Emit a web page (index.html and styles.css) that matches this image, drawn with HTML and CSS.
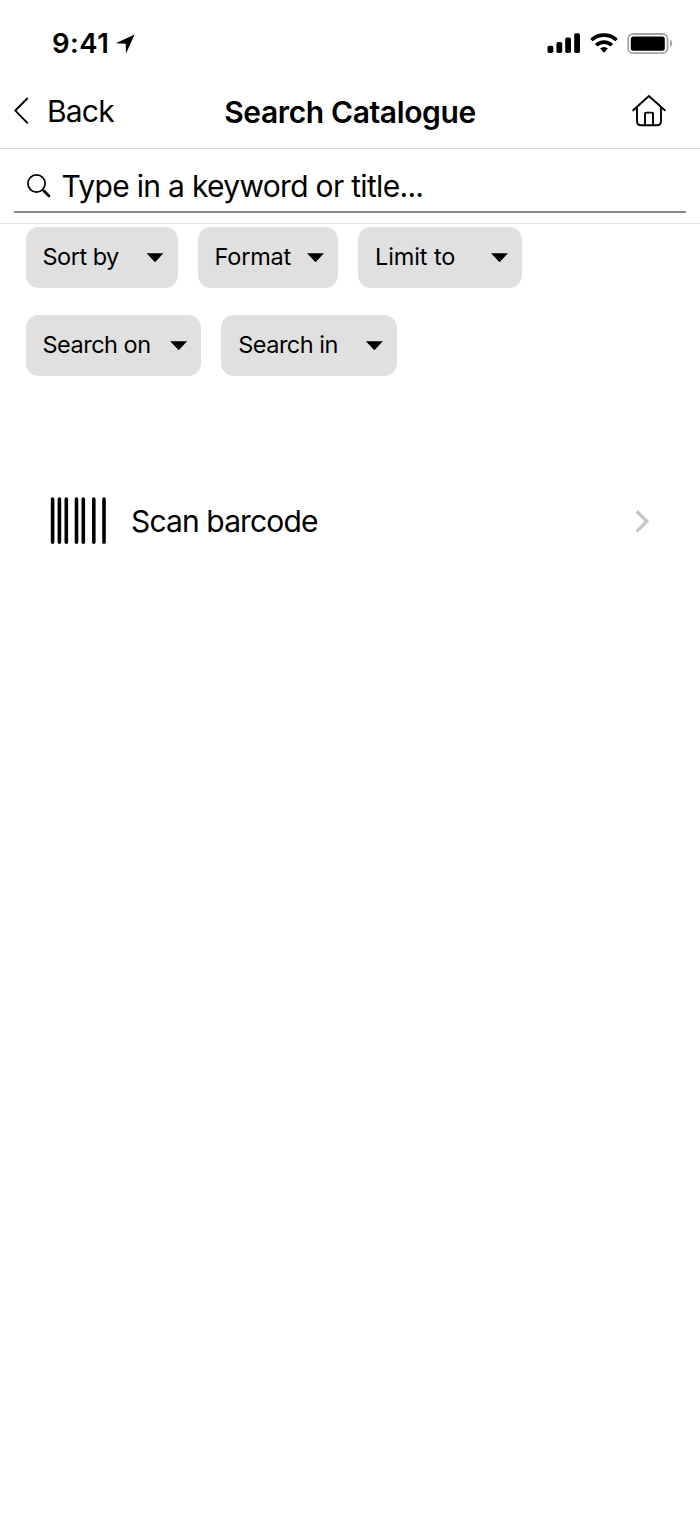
FILE: index.html
```html
<!DOCTYPE html>
<html lang="en">
<head>
<meta charset="utf-8">
<title>Search Catalogue</title>
<link rel="stylesheet" href="styles.css">
</head>
<body>
<div class="status">
  <span class="time">9:41</span>
  <svg class="location" width="20" height="20" viewBox="0 0 20 20"><path d="M19.600.600 11 19.400 10.700 9.700.700 9.200z"/></svg>
  <svg class="indicators" width="126" height="24" viewBox="0 0 126 24">
    <rect x=".5" y="13.800" width="5.800" height="7.200" rx="1.800"/>
    <rect x="9.400" y="10" width="5.800" height="11" rx="1.800"/>
    <rect x="18.200" y="5.500" width="5.800" height="15.500" rx="1.800"/>
    <rect x="27.200" y="1.300" width="5.800" height="19.700" rx="1.800"/>
    <g fill="none" stroke="#000" stroke-width="3.600">
      <path d="M44.400 8a18.600 18.600 0 0 1 25.200 0"/>
      <path d="M49.200 13.200a11.300 11.300 0 0 1 15.600 0"/>
    </g>
    <path d="M57 20.800l-3.900-4.200a5.600 5.600 0 0 1 7.800 0z"/>
    <rect x="81.200" y="2" width="39.300" height="19.200" rx="5" fill="none" stroke="#a3a3a3" stroke-width="1.800"/>
    <rect x="83.800" y="4.500" width="34" height="14.200" rx="2.500"/>
    <path d="M123 7.800c2.900 1.200 2.900 6 0 7.200z" fill="#a3a3a3"/>
  </svg>
</div>
<header class="nav">
  <a class="back">
    <svg width="16" height="28" viewBox="0 0 16 28"><path d="M13.700 1 1.300 13.600l12.400 12.800" fill="none" stroke="#000" stroke-width="1.900"/></svg>
    <span class="back-label">Back</span>
  </a>
  <h1 class="title">Search Catalogue</h1>
  <svg class="home" width="36" height="34" viewBox="0 0 36 34" fill="none" stroke="#000" stroke-width="1.900" stroke-linecap="round" stroke-linejoin="round"><path d="M2.200 17.300 17.900 3l15.900 14.300M6 14.200v14q0 4 4 4h16q4 0 4-4v-14M14 32V20.600q0-1 1-1h6q1 0 1 1V32"/></svg>
</header>
<div class="search">
  <div class="field">
    <svg width="26" height="26" viewBox="0 0 26 26" fill="none" stroke="#000"><circle cx="10.500" cy="10.500" r="8.600" stroke-width="1.700"/><path d="m16.600 16.800 2 2" stroke-width="1.700"/><path d="m18 18 5 5" stroke-width="2.800" stroke-linecap="round"/></svg>
    <span class="placeholder">Type in a keyword or title...</span>
  </div>
</div>
<div class="filters">
  <div class="row">
    <button class="chip sort"><span class="chip-label">Sort by</span><i class="caret"></i></button>
    <button class="chip format"><span class="chip-label">Format</span><i class="caret"></i></button>
    <button class="chip limit"><span class="chip-label">Limit to</span><i class="caret"></i></button>
  </div>
  <div class="row">
    <button class="chip on"><span class="chip-label">Search on</span><i class="caret"></i></button>
    <button class="chip in"><span class="chip-label">Search in</span><i class="caret"></i></button>
  </div>
</div>
<div class="scan">
  <svg width="58" height="50" viewBox="0 0 58 50" stroke="#000" stroke-width="3.600" stroke-linecap="round"><path d="M2.600 3.100v43.200M9.400 3.100v43.200M16.300 3.100v43.200M26.500 3.100v43.200M33.300 3.100v43.200M43.800 3.100v43.200M54 3.100v43.200"/></svg>
  <span class="scan-label">Scan barcode</span>
  <svg class="chevron" width="16" height="24" viewBox="0 0 16 24"><path d="m1.800 2.300 10 10-10 10" fill="none" stroke="#c5c5ca" stroke-width="3.300"/></svg>
</div>
</body>
</html>
```

FILE: styles.css
```css
* { box-sizing: border-box; }
body {
  margin: 0;
  min-height: 1515px;
  background: #fff;
  color: #000;
  font-family: Inter, "Liberation Sans", sans-serif;
}
svg { display: block; flex: none; }
span, h1 { white-space: nowrap; }
.status {
  display: flex;
  align-items: center;
  height: 75px;
  padding: 12px 27px 0 52px;
}
.time {
  width: 63px;
  margin-top: -1px;
  font-size: 27.5px;
  font-weight: 600;
  line-height: 34px;
  letter-spacing: 0.5px;
}
.location { margin-top: 1px; }
.indicators { margin-left: auto; }
.nav {
  display: grid;
  grid-template-columns: 210px 1fr 210px;
  align-items: center;
  height: 74px;
  padding-bottom: 2px;
  border-bottom: 1px solid #dcdcdc;
}
.back {
  display: flex;
  align-items: center;
  gap: 17px;
  padding-left: 14px;
}
.back-label { font-size: 30px; line-height: 36px; letter-spacing: -0.8px; }
.title {
  margin: 2px 0 0;
  text-align: center;
  font-size: 30px;
  font-weight: 600;
  line-height: 36px;
  letter-spacing: -0.38px;
}
.home { justify-self: end; margin: 0 33px 2px 0; }
.search {
  height: 75px;
  padding: 0 14px;
  border-bottom: 1px solid #e3e3e3;
}
.field {
  display: flex;
  align-items: center;
  gap: 9.5px;
  height: 64px;
  padding: 12px 0 0 12px;
  border-bottom: 2px solid #8b8b8b;
}
.placeholder { font-size: 30px; line-height: 36px; letter-spacing: -0.69px; }
.filters {
  display: flex;
  flex-direction: column;
  gap: 27px;
  padding: 2.7px 25.5px 0;
}
.row { display: flex; gap: 20px; }
.chip {
  display: flex;
  align-items: center;
  justify-content: space-between;
  height: 61px;
  padding: 0 14px 0 17px;
  border: 0;
  border-radius: 13px;
  background: #e0e0e0;
  color: #000;
  font: 23.5px/30px Inter, "Liberation Sans", sans-serif;
  letter-spacing: -0.5px;
}
.chip-label { margin-top: -1px; }
.sort { width: 152px; }
.format { width: 140.5px; letter-spacing: -0.2px; }
.limit { width: 164px; letter-spacing: -0.1px; }
.on, .in { width: 175.7px; }
.caret {
  width: 17px;
  height: 9px;
  margin-top: 1px;
  background: #000;
  clip-path: polygon(0 0, 100% 0, 50% 100%);
}
.scan {
  display: flex;
  align-items: center;
  height: 90px;
  margin-top: 100.3px;
  padding: 0 49px 0 50px;
}
.scan-label { margin-left: 23px; font-size: 30px; line-height: 36px; letter-spacing: -0.87px; }
.chevron { margin-left: auto; }
```
